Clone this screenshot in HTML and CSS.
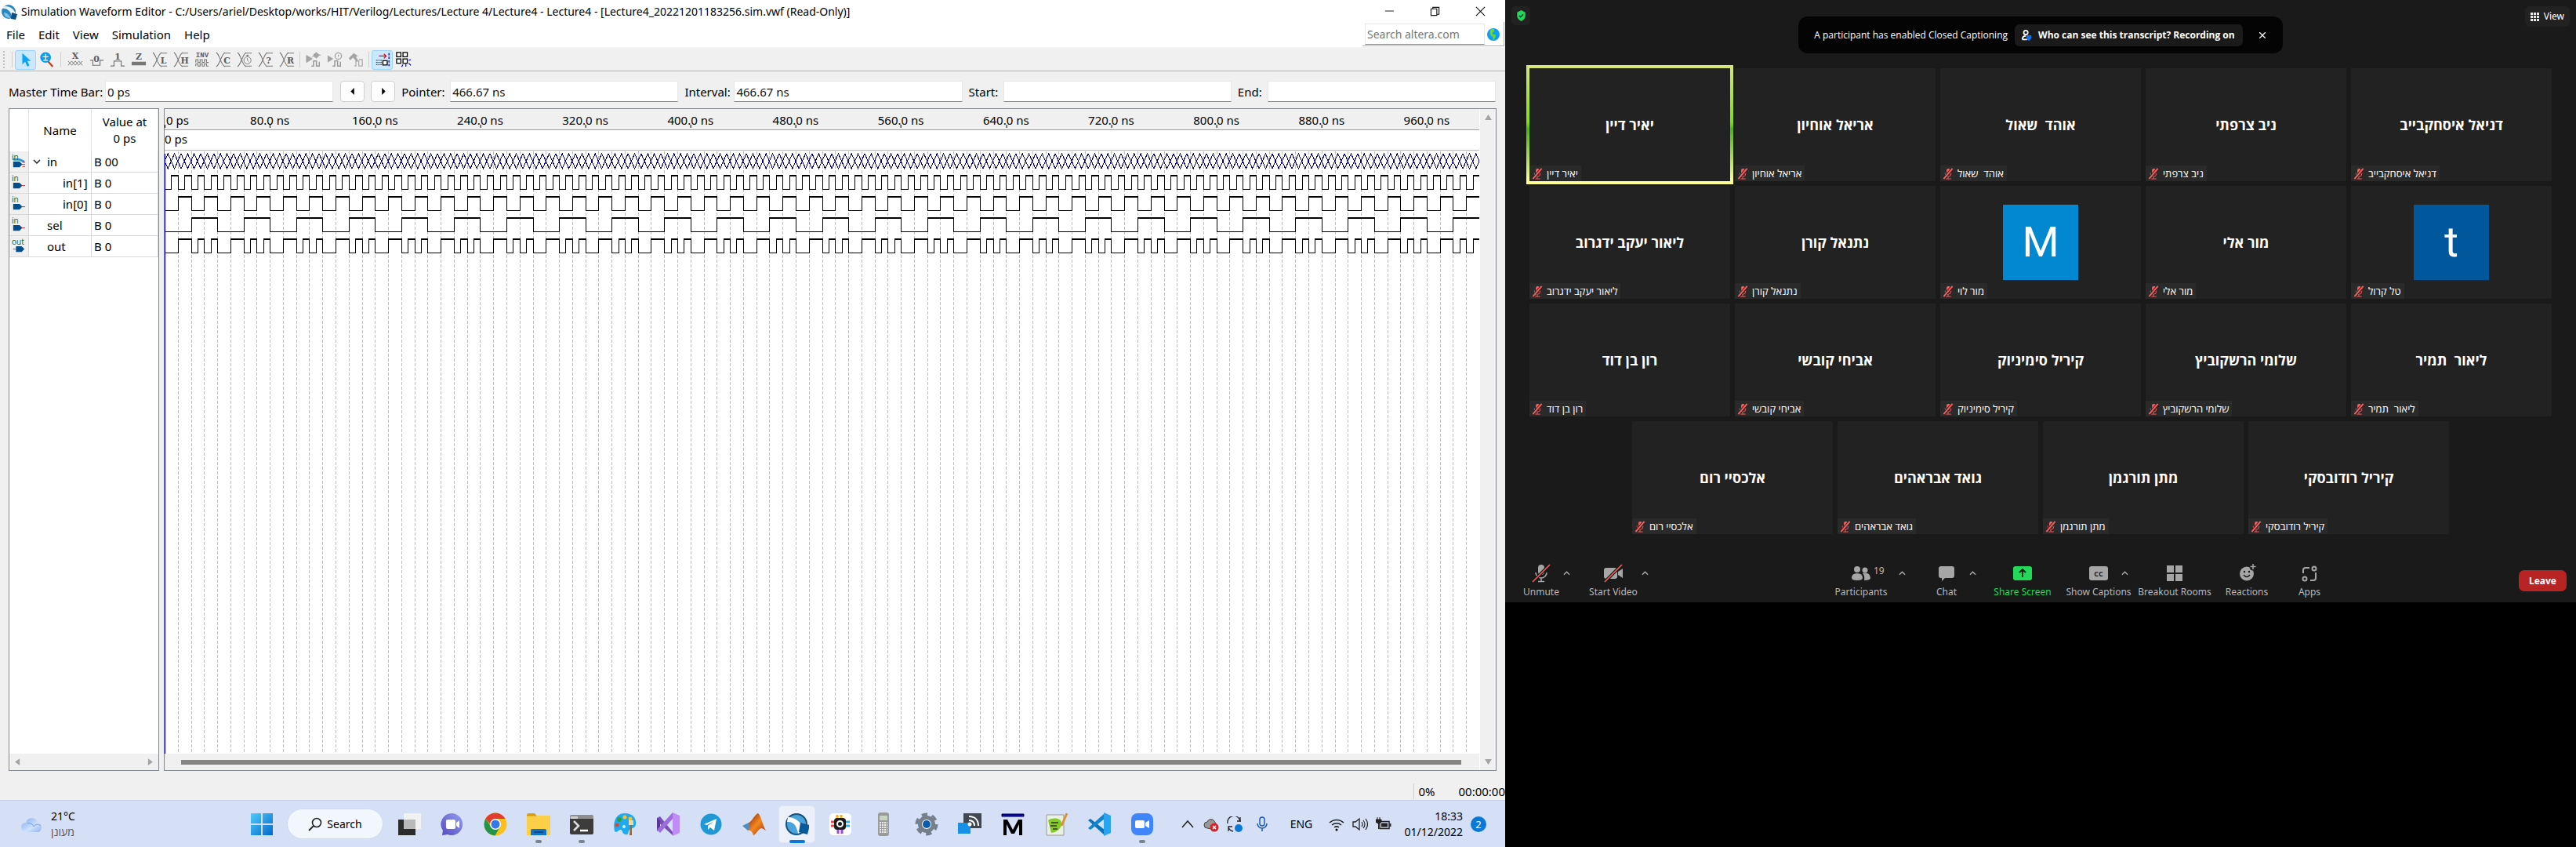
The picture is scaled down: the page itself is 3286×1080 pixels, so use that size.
FILE: index.html
```html
<!DOCTYPE html>
<html lang="en">
<head>
<meta charset="utf-8">
<title>Simulation Waveform Editor</title>
<link rel="stylesheet" href="styles.css">
</head>
<body>
<svg class="defs" aria-hidden="true">
  <defs>
    <symbol id="muted" viewBox="0 0 14 16"><rect x="5" y="1" width="5" height="8" rx="2" fill="#ff5c5c"/><path d="M3 7v1a4 4 0 0 0 8 0V7M7 12v3M4 15h7" stroke="#ff5c5c" stroke-width="1" fill="none"/><path d="M1 15L13 1" stroke="#292929" stroke-width="4"/><path d="M1 15L13 1" stroke="#ff5c5c" stroke-width="2"/></symbol>
    <symbol id="pin" viewBox="0 0 20 22"><path d="M2 11h9l4 4-4 4H2z" fill="#004e8c"/><path d="M14 15h5" stroke="#e02020" stroke-width="1"/></symbol>
    <symbol id="up" viewBox="0 0 10 6"><path d="M1 5l4-4 4 4" fill="none" stroke="#b0b0b0" stroke-width="1.4"/></symbol>
    <symbol id="bus" viewBox="0 0 22 22"><path d="M1 1C6 4 7 18 13 21M13 1C8 4 6 18 1 21M12 2h9M12 20h9" fill="none" stroke="#777" stroke-width="1.2"/></symbol>
    <linearGradient id="win" x1="0" y1="0" x2="1" y2="1"><stop offset="0" stop-color="#4fcbfb"/><stop offset="1" stop-color="#0468cc"/></linearGradient>
    <linearGradient id="purple" x1="0" y1="1" x2="1" y2="0"><stop offset="0" stop-color="#5348c2"/><stop offset="1" stop-color="#94a0f0"/></linearGradient>
    <linearGradient id="cloud" x1="0" y1="0" x2="1" y2="1"><stop offset="0" stop-color="#7ea8f2"/><stop offset=".6" stop-color="#cfe2fb"/><stop offset="1" stop-color="#8fb0f0"/></linearGradient>
    <linearGradient id="flame" x1="0" y1="0" x2="1" y2="1"><stop offset="0" stop-color="#8a1a10"/><stop offset=".5" stop-color="#f28a20"/><stop offset="1" stop-color="#a8200f"/></linearGradient>
  </defs>
</svg>

<main class="editor">
  <header class="titlebar">
    <svg class="app-icon" viewBox="0 0 22 22"><circle cx="10" cy="11" r="9" fill="#2b86c0"/><path d="M2 5C8 2 17 6 19 14l-5 5C14 11 8 6 2 7z" fill="#e8f4fb"/><path d="M4 12c4 0 7 3 8 7-4 0-8-2-8-7z" fill="#7cc4ea"/><path d="M14 12l7 2-2 7-6-1z" fill="#0b4f86"/></svg>
    <h1>Simulation Waveform Editor - C:/Users/ariel/Desktop/works/HIT/Verilog/Lectures/Lecture 4/Lecture4 - Lecture4 - [Lecture4_20221201183256.sim.vwf (Read-Only)]</h1>
    <button class="win-btn" aria-label="Minimize"><svg viewBox="0 0 14 14"><path d="M1 6.500h12" stroke="#111"/></svg></button>
    <button class="win-btn" aria-label="Restore"><svg viewBox="0 0 14 14"><path d="M1.500 3.500h8v9h-8zM4 3V1.500h8.500v9.500H10" fill="none" stroke="#111" stroke-width="1.200"/></svg></button>
    <button class="win-btn" aria-label="Close"><svg viewBox="0 0 14 14"><path d="M1 1l12 12M13 1L1 13" stroke="#111" stroke-width="1.200"/></svg></button>
  </header>
  <nav class="menubar">
    <button>File</button><button>Edit</button><button>View</button><button>Simulation</button><button>Help</button>
    <div class="search-site">
      <input type="text" placeholder="Search altera.com" aria-label="Search altera.com">
      <svg viewBox="0 0 16 16"><circle cx="8" cy="8" r="8" fill="#0aa0f5"/><path d="M5 1c3-1 5 1 4 3S6 5 7 7s5 0 4 3-2 4-3 5c-1-2 0-4-2-5S2 5 5 1z" fill="#6fd52e"/></svg>
    </div>
  </nav>
  <div class="toolbar" role="toolbar">
    <span class="grip"></span><span class="sep"></span>
    <button class="tool on" aria-label="Selection tool"><svg viewBox="0 0 22 22"><path d="M6 2v16l4-4 3 7 3-2-3-6h5z" fill="#0aa5fa"/></svg></button>
    <button class="tool" aria-label="Zoom tool"><svg viewBox="0 0 22 22"><path d="M12 13l7 8" stroke="#c4401c" stroke-width="2.500"/><circle cx="9" cy="8" r="7.500" fill="#0a9df2"/><path d="M5 7h8M9 3v8M6 12h6" stroke="#fff" stroke-width="1.300"/></svg></button>
    <span class="sep wide"></span>
    <button class="tool" aria-label="Forcing unknown"><svg viewBox="0 0 22 22"><path d="M1 19l5-6 5 6 5-6 5 6M1 13l5 6 5-6 5 6 5-6" stroke="#777" fill="none"/><text x="11" y="10">X</text></svg></button>
    <button class="tool" aria-label="Forcing low"><svg viewBox="0 0 22 22"><path d="M2 12h4v7h10v-7h5" stroke="#777" fill="none" stroke-width="1.300"/><text x="11" y="14">0</text></svg></button>
    <button class="tool" aria-label="Forcing high"><svg viewBox="0 0 22 22"><path d="M1 20h5v-7h10v7h5" stroke="#777" fill="none" stroke-width="1.300"/><text x="11" y="11">1</text></svg></button>
    <button class="tool" aria-label="High impedance"><svg viewBox="0 0 22 22"><path d="M1 14h20v5H1z" fill="#777"/><text x="11" y="11">Z</text></svg></button>
    <button class="tool" aria-label="Weak low"><svg viewBox="0 0 22 22"><use href="#bus"/><text x="16" y="16">L</text></svg></button>
    <button class="tool" aria-label="Weak high"><svg viewBox="0 0 22 22"><use href="#bus"/><text x="16" y="16">H</text></svg></button>
    <button class="tool" aria-label="Invert"><svg viewBox="0 0 22 22"><text class="small" x="11" y="8">INV</text><path d="M2 15v-4h3v4h3v-4h3v4h3v-4h3v4h3M2 20v-3h3v3h3v-3h3v3h3v-3h3v3h3" stroke="#777" fill="none" stroke-width="1.200"/></svg></button>
    <button class="tool" aria-label="Count value"><svg viewBox="0 0 22 22"><use href="#bus"/><text x="16" y="16">C</text></svg></button>
    <button class="tool" aria-label="Overwrite clock"><svg viewBox="0 0 22 22"><use href="#bus"/><circle cx="15" cy="12" r="5" fill="#f0f0f0" stroke="#777"/><path d="M15 4v3M13 5h4M15 9v3l2 2" stroke="#777" fill="none"/></svg></button>
    <button class="tool" aria-label="Arbitrary value"><svg viewBox="0 0 22 22"><use href="#bus"/><text x="15" y="16">?</text></svg></button>
    <button class="tool" aria-label="Random values"><svg viewBox="0 0 22 22"><use href="#bus"/><text x="16" y="16">R</text></svg></button>
    <span class="sep"></span>
    <button class="tool" aria-label="Functional simulation" disabled><svg viewBox="0 0 22 22"><path d="M1 5l8 5-8 5zM11 4l4-3 4 4-4 4-4-3zM8 8l3-2M18 4l3 1" fill="#a4a4a4" stroke="#a4a4a4"/><path d="M8 20h3v-7h4v7h4v-6" fill="none" stroke="#999" stroke-width="1.600"/></svg></button>
    <button class="tool" aria-label="Timing simulation" disabled><svg viewBox="0 0 22 22"><path d="M1 5l8 5-8 5z" fill="#a4a4a4"/><circle cx="16" cy="6" r="4.500" fill="none" stroke="#a4a4a4" stroke-width="1.500"/><path d="M16 4v3" stroke="#999"/><path d="M8 20h3v-7h4v7h4v-6" fill="none" stroke="#999" stroke-width="1.600"/></svg></button>
    <button class="tool" aria-label="Generate testbench" disabled><svg viewBox="0 0 22 22"><path d="M1 9l7-7 6 4-3 1 3 5-2 2-5-6-4 4z" fill="#a4a4a4"/><path d="M9 20h2v-7h4v7h5v-9h-5" fill="none" stroke="#aaa" stroke-width="1.400"/></svg></button>
    <span class="sep"></span>
    <button class="tool on" aria-label="Snap to transition"><svg viewBox="0 0 22 22"><path d="M6 6h10M13 3l3 3-3 3" stroke="#e00" fill="none" stroke-width="1.400"/><path d="M2 12h9M2 18h9M2 15h9" stroke="#222" stroke-dasharray="2 1"/><path d="M11.500 12.500h6v6h-6z" fill="#fff" stroke="#000" stroke-width="1.500"/><path d="M20 2v18" stroke="#00f" stroke-width="1.500" stroke-dasharray="3 2"/></svg></button>
    <button class="tool" aria-label="Snap to grid"><svg viewBox="0 0 22 22"><path d="M1 1h6v6H1zM10 1h6v6h-6zM1 10h6v6H1zM10 10h6v6h-6z" fill="#fff" stroke="#000" stroke-width="1.400"/><path d="M18 12l3-1M18 16l3 3M14 17v4M10 18l-2 3" stroke="#00f" stroke-width="1.300"/></svg></button>
  </div>
  <form class="params">
    <label for="f1">Master Time Bar:</label><input id="f1" value="0 ps">
    <div class="stepper">
      <button type="button" aria-label="Previous transition"><svg viewBox="0 0 6 10"><path d="M5 0v10L0 5z"/></svg></button>
      <button type="button" aria-label="Next transition"><svg viewBox="0 0 6 10"><path d="M1 0v10l5-5z"/></svg></button>
      <label for="f2">Pointer:</label>
    </div><input id="f2" value="466.67 ns">
    <label class="mid" for="f3">Interval:</label><input id="f3" value="466.67 ns">
    <label class="mid" for="f4">Start:</label><input id="f4">
    <label class="mid" for="f5">End:</label><input id="f5">
  </form>
  <section class="panes">
    <div class="tree">
      <table>
        <thead><tr><th class="c-icon"></th><th class="c-name">Name</th><th>Value at<br>0 ps</th></tr></thead>
        <tbody>
          <tr><td class="kind"><span>in</span><svg viewBox="0 0 20 22"><path d="M2 8h8c4 0 4 3 8 3" stroke="#2a9ae0" stroke-width="3" fill="none"/><use href="#pin"/><path d="M15 12h4M15 18h4" stroke="#e02020"/></svg></td><td class="n1"><svg class="chev" viewBox="0 0 10 6"><path d="M1 1l4 4 4-4" fill="none" stroke="#222" stroke-width="1.500"/></svg>in</td><td>B 00</td></tr>
          <tr><td class="kind"><span>in</span><svg viewBox="0 0 20 22"><use href="#pin"/></svg></td><td class="n2">in[1]</td><td>B 0</td></tr>
          <tr><td class="kind"><span>in</span><svg viewBox="0 0 20 22"><use href="#pin"/></svg></td><td class="n2">in[0]</td><td>B 0</td></tr>
          <tr><td class="kind"><span>in</span><svg viewBox="0 0 20 22"><use href="#pin"/></svg></td><td class="n0">sel</td><td>B 0</td></tr>
          <tr><td class="kind"><span>out</span><svg viewBox="0 0 20 22"><path d="M6 11h8l4 4-4 4H6z" fill="#004e8c"/><path d="M2 15h4" stroke="#e02020"/></svg></td><td class="n0">out</td><td>B 0</td></tr>
        </tbody>
      </table>
      <div class="hbar ends"><svg viewBox="0 0 8 10"><path d="M7 0v10L0 5z"/></svg><svg viewBox="0 0 8 10"><path d="M1 0v10l7-5z"/></svg></div>
    </div>
    <div class="wave">
      <div class="wave-main">
        <div class="ruler" id="ruler"></div>
        <div class="cursor-band">0 ps</div>
        <div class="plot" id="plot"></div>
        <div class="hbar"><span class="thumb"></span></div>
      </div>
      <div class="vbar"><svg viewBox="0 0 10 8"><path d="M5 0l5 8H0z"/></svg><svg viewBox="0 0 10 8"><path d="M0 0h10L5 8z"/></svg></div>
    </div>
  </section>
  <footer class="status"><span class="pct">0%</span><span>00:00:00</span></footer>

  <nav class="taskbar">
    <button class="weather"><svg viewBox="0 0 30 22"><path d="M7 21a6 6 0 0 1 0-12 8 8 0 0 1 15-1 7 7 0 0 1 1 13z" fill="url(#cloud)"/><path d="M9 10c4-1 7 1 8 4 2-3 6-4 9-1" fill="none" stroke="#6f98e8"/></svg><span>21°C<em dir="rtl">מעונן</em></span></button>
    <button class="task" aria-label="Start"><svg viewBox="0 0 30 30"><path d="M1 1h13v13H1zM16 1h13v13H16zM1 16h13v13H1zM16 16h13v13H16z" fill="url(#win)"/></svg></button>
    <button class="search"><svg viewBox="0 0 18 18"><circle cx="11" cy="7" r="5.500" fill="none" stroke="#222" stroke-width="1.600"/><path d="M7 11l-6 6" stroke="#222" stroke-width="1.800"/></svg>Search</button>
    <button class="task" aria-label="Task view"><svg viewBox="0 0 30 30"><path d="M1 9h22v20H1z" fill="#2b2b2b"/><path d="M8 1h22v20H8z" fill="#f1f1f1"/><path d="M8 9h15v12H8z" fill="#b9b9b9"/></svg></button>
    <button class="task" aria-label="Chat"><svg viewBox="0 0 30 30"><path d="M15 1a14 14 0 1 1-6 27l-7 1 1-6A14 14 0 0 1 15 1z" fill="url(#purple)"/><rect x="7" y="9" width="12" height="12" rx="2" fill="#fff"/><path d="M20 13l4-3v10l-4-3z" fill="#fff"/></svg></button>
    <button class="task" aria-label="Chrome"><svg viewBox="0 0 30 30"><circle cx="15" cy="15" r="14.500" fill="#fbc116"/><path d="M2.500 7.700A14.500 14.500 0 0 1 27.600 8H15l-5 9z" fill="#e33b2e"/><path d="M2.500 7.700A14.500 14.500 0 0 0 14.500 29.500L21 18l-12 0z" fill="#229548"/><circle cx="15" cy="15" r="7" fill="#fff"/><circle cx="15" cy="15" r="5.500" fill="#3479ea"/></svg></button>
    <button class="task run" aria-label="File Explorer"><svg viewBox="0 0 30 30"><path d="M0 3q0-2 2-2h8l3 4H0z" fill="#dda012"/><path d="M0 6h11l3-2h16v25H0z" fill="#fccf48"/><path d="M5 29v-6q0-2 2-2h16q2 0 2 2v6z" fill="#1272c8"/><path d="M9 25h12" stroke="#0a4a92" stroke-width="2"/></svg></button>
    <button class="task run" aria-label="Terminal"><svg viewBox="0 0 30 30"><rect y="4" width="30" height="24" rx="2" fill="#3c3c3c"/><path d="M0 8V5q0-2 2-2h26q2 0 2 2v3z" fill="#8f8f8f"/><path d="M1 8V5h9v3z" fill="#d0d0d0"/><path d="M5 11l6 6-6 6" fill="none" stroke="#ddd" stroke-width="2.500"/><path d="M13 23h10" stroke="#fff" stroke-width="2.500"/></svg></button>
    <button class="task" aria-label="Paint"><svg viewBox="0 0 30 30"><path d="M15 1c10 0 15 6 14 14-1 6-5 4-8 7s0 7-5 6-3-5-6-6-5 5-8 2C-1 10 5 1 15 1z" fill="#1eaaf0"/><circle cx="8" cy="9" r="3" fill="#2ba03c"/><circle cx="15" cy="6" r="2.500" fill="#f6c12a"/><circle cx="22" cy="8" r="2.500" fill="#f6c12a"/><circle cx="5" cy="16" r="2.500" fill="#d94a2c"/><circle cx="14" cy="18" r="2" fill="#d9f1ff"/><path d="M22 16h2v13l-3 0z" fill="#a86422"/><path d="M20 10h6v6h-6z" fill="#f0d9a8"/></svg></button>
    <button class="task" aria-label="Visual Studio"><svg viewBox="0 0 30 30"><path d="M1 7l4-2 17 21-1 3L1 11z" fill="#7a4fb8"/><path d="M1 24V7l4 4v8z" fill="#5a3496"/><path d="M1 22l20-22v8L5 26z" fill="#9d6ddc"/><path d="M21 0l9 4v22l-9 4z" fill="#c08cf6"/></svg></button>
    <button class="task" aria-label="Telegram"><svg viewBox="0 0 30 30"><circle cx="15" cy="15" r="13.500" fill="#2098d4"/><path d="M6 15l16-7-3 15-5-4-3 3v-5l8-6-9 5z" fill="#fff"/></svg></button>
    <button class="task" aria-label="MATLAB"><svg viewBox="0 0 30 30"><path d="M0 17l8-4 5 5-6 5z" fill="#4d8dc0"/><path d="M8 13c4-1 8-11 12-12 4 3 6 16 10 22-4-3-6-4-9-1s-4 6-7 7c-1-4-3-6-7-7 4-2 2-6 1-9z" fill="url(#flame)"/></svg></button>
    <button class="task active" aria-label="Simulation Waveform Editor"><svg viewBox="0 0 30 30"><circle cx="14" cy="15" r="13" fill="#4aa3da" stroke="#13507e" stroke-width="2"/><path d="M3 6c10 0 18 7 19 16l-6 5C14 16 10 11 2 12z" fill="#fff"/><path d="M19 13l12 3-3 12-11-3z" fill="#07599b"/></svg></button>
    <button class="task" aria-label="Chip tool"><svg viewBox="0 0 30 30"><rect x="1" y="1" width="28" height="28" rx="5" fill="#fff"/><path d="M11 3v6M16 3v6" stroke="#f4b400" stroke-width="3"/><path d="M12 21v6M17 21v6" stroke="#9c4ce0" stroke-width="3"/><path d="M3 12h6M3 17h6" stroke="#f04848" stroke-width="3"/><path d="M21 12h6M21 17h6" stroke="#28b4e8" stroke-width="3"/><rect x="7" y="7" width="15" height="15" rx="4" fill="#1c1c1c"/><circle cx="14.500" cy="14.500" r="3.500" fill="none" stroke="#fff" stroke-width="2"/></svg></button>
    <button class="task" aria-label="Calculator"><svg viewBox="0 0 30 30"><rect x="8" y="0" width="14" height="30" rx="3" fill="#9a9a98"/><path d="M10 4h10v6H10z" fill="#c9d3c4"/><path d="M10 13h10M10 16h10M10 19h10M10 22h10M10 25h10" stroke="#eee" stroke-width="2" stroke-dasharray="2 1"/></svg></button>
    <button class="task" aria-label="Settings"><svg viewBox="0 0 30 30"><circle cx="15" cy="15" r="12" fill="none" stroke="#75808c" stroke-width="5" stroke-dasharray="7 5.560"/><circle cx="15" cy="15" r="8.500" fill="#fff" stroke="#75808c" stroke-width="5"/><circle cx="15" cy="15" r="5" fill="#0a5cab"/></svg></button>
    <button class="task" aria-label="Wireless display"><svg viewBox="0 0 30 30"><path d="M7 1h23v19H7z" fill="#414750"/><path d="M14 5c8 0 12 5 12 12M14 10c5 0 7 3 7 7" fill="none" stroke="#fff" stroke-width="2"/><path d="M0 13h16v14H0z" fill="#1790e8"/><circle cx="15" cy="15" r="2.500" fill="#fff"/></svg></button>
    <button class="task" aria-label="ModelSim"><svg viewBox="0 0 30 30"><path d="M1 2h28v3H1z" fill="#00f" stroke="#000"/><path d="M3 29V9h5l7 13 7-13h5v20h-4V15l-6 12h-4L7 15v14z" fill="#000"/></svg></button>
    <button class="task" aria-label="Notepad++"><svg viewBox="0 0 30 30"><path d="M3 3h22v26H3z" fill="#e9f0e4" stroke="#999"/><path d="M5 10c6-4 16-3 17 3s-5 12-13 13z" fill="#86c92a"/><path d="M9 13h9M8 17h8M11 21h6" stroke="#333" stroke-width="1.500"/><path d="M29 1l-7 16" stroke="#d99433" stroke-width="3"/></svg></button>
    <button class="task" aria-label="Visual Studio Code"><svg viewBox="0 0 30 30"><path d="M1 10l3-2 18 14v7z" fill="#0b73b8"/><path d="M1 20l3 2L22 8V1z" fill="#1385cf"/><path d="M21 0l9 4v22l-9 4z" fill="#2aa4ee"/></svg></button>
    <button class="task run" aria-label="Zoom"><svg viewBox="0 0 30 30"><rect x="1" y="1" width="28" height="28" rx="8" fill="#3f85fb"/><rect x="6" y="10" width="12" height="10" rx="2" fill="#fff"/><path d="M19 13l5-3v10l-5-3z" fill="#fff"/></svg></button>
    <div class="tray">
      <svg viewBox="0 0 20 20"><path d="M3 14l7-8 7 8" fill="none" stroke="#222" stroke-width="1.500"/></svg>
      <svg viewBox="0 0 20 20"><path d="M5 15a4 4 0 0 1 0-8 5 5 0 0 1 9-1l4 6-8 4z" fill="#999" stroke="#444"/><circle cx="14" cy="14" r="5.500" fill="#d8222b"/><path d="M12 12l4 4M16 12l-4 4" stroke="#fff" stroke-width="1.500"/></svg>
      <svg viewBox="0 0 20 20"><path d="M1 9a8 8 0 0 1 16-3V1M18 6h-5M2 19v-6h5M2 14a8 8 0 0 0 6 5" fill="none" stroke="#222" stroke-width="1.300"/><circle cx="15" cy="15" r="5" fill="#0a78d6"/></svg>
      <svg class="mic" viewBox="0 0 20 20"><rect x="7" y="1" width="6" height="11" rx="3" fill="#cfe0f8" stroke="#1c56b0" stroke-width="1.400"/><path d="M4 9a6 6 0 0 0 12 0M10 15v4" fill="none" stroke="#1c56b0" stroke-width="1.500"/></svg>
      <span class="lang">ENG</span>
      <svg viewBox="0 0 20 20"><path d="M1 8a13 13 0 0 1 18 0M4 11a9 9 0 0 1 12 0M7 14a5 5 0 0 1 6 0" fill="none" stroke="#222" stroke-width="1.500"/><circle cx="10" cy="17" r="1.500"/></svg>
      <svg viewBox="0 0 20 20"><path d="M1 7h3l5-4v14l-5-4H1z" fill="none" stroke="#222" stroke-width="1.300"/><path d="M12 7q2 3 0 6M14 5q4 5 0 10M17 3q5 7 0 14" fill="none" stroke="#222" stroke-width="1.200"/></svg>
      <svg viewBox="0 0 20 20"><path d="M5 6.500h12v9H5z" fill="none" stroke="#222" stroke-width="1.500"/><path d="M7 8.500h8v5H7z" fill="#222"/><path d="M18.500 9v4" stroke="#222" stroke-width="2"/><path d="M0 4h7v3q-3 4-7 0zM2 1v3M5 1v3M3.500 8v8" fill="#222" stroke="#222"/></svg>
      <time>18:33<br>01/12/2022</time>
      <span class="badge">2</span>
    </div>
  </nav>
</main>

<aside class="meeting">
  <header class="meet-top">
    <span class="shield"><svg viewBox="0 0 14 16"><path d="M7 0l6 3v5q0 5-6 8-6-3-6-8V3z" fill="#23d959"/><path d="M4 8l2 2 4-4" fill="none" stroke="#143" stroke-width="1.800"/></svg></span>
    <div class="banner">A participant has enabled Closed Captioning
      <button class="who"><svg viewBox="0 0 14 16"><circle cx="6" cy="4" r="3" fill="none" stroke="#fff" stroke-width="2"/><path d="M1 14c0-4 2-5 5-5M1 14h7" fill="none" stroke="#fff" stroke-width="2"/><path d="M7 8h7v4q-1 3-3.500 4Q8 15 7 12z" fill="#0e72ed"/></svg>Who can see this transcript? Recording on</button>
      <button class="dismiss" aria-label="Dismiss"><svg viewBox="0 0 8 8"><path d="M0 0l8 8M8 0L0 8" stroke="#fff" stroke-width="1.300"/></svg></button>
    </div>
    <button class="view"><svg viewBox="0 0 11 11"><path d="M0 0h3v3H0zM4 0h3v3H4zM8 0h3v3H8zM0 4h3v3H0zM4 4h3v3H4zM8 4h3v3H8zM0 8h3v3H0zM4 8h3v3H4zM8 8h3v3H8z" fill="#e8e8e8"/></svg>View</button>
  </header>
  <section class="gallery">
    <article class="tile speaking"><b>יאיר דיין</b><span class="tag"><svg><use href="#muted"/></svg><i>יאיר דיין</i></span></article>
    <article class="tile"><b>אריאל אוחיון</b><span class="tag"><svg><use href="#muted"/></svg><i>אריאל אוחיון</i></span></article>
    <article class="tile"><b>אוהד  שאול</b><span class="tag"><svg><use href="#muted"/></svg><i>אוהד  שאול</i></span></article>
    <article class="tile"><b>ניב צרפתי</b><span class="tag"><svg><use href="#muted"/></svg><i>ניב צרפתי</i></span></article>
    <article class="tile"><b>דניאל איסחקבייב</b><span class="tag"><svg><use href="#muted"/></svg><i>דניאל איסחקבייב</i></span></article>
    <article class="tile"><b>ליאור יעקב ידגרוב</b><span class="tag"><svg><use href="#muted"/></svg><i>ליאור יעקב ידגרוב</i></span></article>
    <article class="tile"><b>נתנאל קורן</b><span class="tag"><svg><use href="#muted"/></svg><i>נתנאל קורן</i></span></article>
    <article class="tile"><span class="avatar">M</span><span class="tag"><svg><use href="#muted"/></svg><i>מור לוי</i></span></article>
    <article class="tile"><b>מור אלי</b><span class="tag"><svg><use href="#muted"/></svg><i>מור אלי</i></span></article>
    <article class="tile"><span class="avatar deep">t</span><span class="tag"><svg><use href="#muted"/></svg><i>טל קרול</i></span></article>
    <article class="tile"><b>רון בן דוד</b><span class="tag"><svg><use href="#muted"/></svg><i>רון בן דוד</i></span></article>
    <article class="tile"><b>אביחי קובשי</b><span class="tag"><svg><use href="#muted"/></svg><i>אביחי קובשי</i></span></article>
    <article class="tile"><b>קיריל סימיניוק</b><span class="tag"><svg><use href="#muted"/></svg><i>קיריל סימיניוק</i></span></article>
    <article class="tile"><b>שלומי הרשקוביץ</b><span class="tag"><svg><use href="#muted"/></svg><i>שלומי הרשקוביץ</i></span></article>
    <article class="tile"><b>ליאור  תמיר</b><span class="tag"><svg><use href="#muted"/></svg><i>ליאור  תמיר</i></span></article>
    <article class="tile"><b>אלכסיי רום</b><span class="tag"><svg><use href="#muted"/></svg><i>אלכסיי רום</i></span></article>
    <article class="tile"><b>גואד אבראהים</b><span class="tag"><svg><use href="#muted"/></svg><i>גואד אבראהים</i></span></article>
    <article class="tile"><b>מתן תורגמן</b><span class="tag"><svg><use href="#muted"/></svg><i>מתן תורגמן</i></span></article>
    <article class="tile"><b>קיריל רודובסקי</b><span class="tag"><svg><use href="#muted"/></svg><i>קיריל רודובסקי</i></span></article>
  </section>
  <footer class="controls">
    <div class="group left">
      <button class="ctl w52"><svg viewBox="0 0 24 24"><rect x="8" y="1" width="8" height="13" rx="4"/><path d="M5 11a7 7 0 0 0 14 0M12 18v4M8 22.500h8" fill="none" stroke="#a6a6a6" stroke-width="1.600"/><path d="M1 23L23 1" stroke="#1a1a1a" stroke-width="4"/><path d="M1 23L23 1" stroke="#ff5c5c" stroke-width="1.600"/></svg>Unmute</button>
      <button class="more spaced" aria-label="Audio options"><svg><use href="#up"/></svg></button>
      <button class="ctl w68"><svg viewBox="0 0 24 24"><rect x="0" y="5" width="17" height="14" rx="3"/><path d="M18 10l6-4v12l-6-4z"/><path d="M1 23L23 1" stroke="#1a1a1a" stroke-width="4"/><path d="M1 23L23 1" stroke="#ff5c5c" stroke-width="1.600"/></svg>Start Video</button>
      <button class="more" aria-label="Video options"><svg><use href="#up"/></svg></button>
    </div>
    <div class="group">
      <button class="ctl w92"><svg viewBox="0 0 24 24"><circle cx="7" cy="7" r="4"/><path d="M0 18q0-6 7-6t7 6q0 3-7 3t-7-3z"/><circle cx="17" cy="8" r="3.500"/><path d="M14 12q9-2 10 6 0 3-8 3 1-6-2-9z"/></svg><span class="count">19</span>Participants</button>
      <button class="more" aria-label="Participant options"><svg><use href="#up"/></svg></button>
      <button class="ctl w102"><svg viewBox="0 0 24 24"><path d="M5 3h14q3 0 3 3v9q0 3-3 3h-9l-4 4v-4H5q-3 0-3-3V6q0-3 3-3z"/></svg>Chat</button>
      <button class="more inset" aria-label="Chat options"><svg><use href="#up"/></svg></button>
      <button class="ctl w92 share"><svg viewBox="0 0 24 24"><rect y="3" width="24" height="18" rx="3" fill="#23d959"/><path d="M12 17V8M8 11l4-4 4 4" fill="none" stroke="#1a1a1a" stroke-width="1.800"/></svg>Share Screen</button>
      <button class="ctl w102"><svg viewBox="0 0 24 24"><rect y="3" width="24" height="18" rx="3"/><text x="12" y="16" text-anchor="middle">CC</text></svg>Show Captions</button>
      <button class="more inset" aria-label="Caption options"><svg><use href="#up"/></svg></button>
      <button class="ctl w92"><svg viewBox="0 0 24 24"><path d="M2 2h9v9H2zM13 2h9v9h-9zM2 13h9v9H2zM13 13h9v9h-9z"/></svg>Breakout Rooms</button>
      <button class="ctl w92"><svg viewBox="0 0 24 24"><circle cx="12" cy="12.500" r="9"/><circle cx="9" cy="10" r="1.200" fill="#1a1a1a"/><circle cx="15" cy="10" r="1.200" fill="#1a1a1a"/><path d="M8 14q4 5 8 0" fill="none" stroke="#1a1a1a" stroke-width="1.500"/><circle cx="20" cy="4" r="4.500" fill="#1a1a1a"/><path d="M20 0v7M16.500 3.500h7" stroke="#a6a6a6" stroke-width="1.500"/></svg>Reactions</button>
      <button class="ctl w68"><svg viewBox="0 0 24 24" class="line"><path d="M4 12V8q0-3 3-3h5M20 11v7q0 3-3 3h-4"/><circle cx="18" cy="6" r="2.500"/><circle cx="6" cy="19" r="2.500"/></svg>Apps</button>
    </div>
    <div class="group right"><button class="leave">Leave</button></div>
  </footer>
</aside>
<script src="wave.js"></script>
</body>
</html>
```
FILE: wave.js
```js
const END = 1000;
const ruler = document.getElementById('ruler');
const plot = document.getElementById('plot');

for (let t = 0; t < END; t += 80) {
  const mark = document.createElement('span');
  mark.className = t ? 'mark' : 'mark first';
  mark.style.left = (t / END * 100) + '%';
  mark.textContent = t ? t + '.0 ns' : '0 ps';
  ruler.append(mark);
}

const in1 = t => Math.floor(t / 5) % 2;
const in0 = t => Math.floor(t / 10) % 2;
const sel = t => Math.floor(t / 20) % 2;
const out = t => (sel(t) ? in1(t) : in0(t));

function draw() {
  const w = plot.clientWidth, h = plot.clientHeight;
  const x = t => Math.round(t / END * w);
  let grid = '', high = '', low = '', edges = '', a = '', b = '';

  for (let t = 10; t < END; t += 10) grid += `M${x(t) + .5} 1V${h}`;

  [in1, in0, sel, out].forEach((signal, row) => {
    const top = 32 + row * 27, bottom = top + 17;
    for (let t = 0; t < END; t += 5) {
      const v = signal(t);
      if (v) high += `M${x(t)} ${top}H${x(t + 5) + 1}`;
      else low += `M${x(t)} ${bottom + .5}H${x(t + 5) + 1}`;
      if (t && v !== signal(t - 5)) edges += `M${x(t) + .5} ${top - 1}V${bottom + 1}`;
    }
  });

  for (let i = -1; i <= END / 5; i++) {
    const px = (i + .5) * 5 / END * w;
    const odd = i & 1;
    a += `${a ? 'L' : 'M'}${px} ${odd ? 23 : 4}`;
    b += `${b ? 'L' : 'M'}${px} ${odd ? 4 : 23}`;
  }

  plot.innerHTML = `<svg width="${w}" height="${h}" shape-rendering="crispEdges">
    <path class="grid-line" d="${grid}"/><path class="bus-line" d="${a}${b}"/>
    <path class="high" d="${high}"/><path class="low" d="${low}${edges}"/>
    <path class="time-bar" d="M.5 4V${h}"/></svg>`;
}
draw();
addEventListener('resize', draw);
```
FILE: styles.css
```css
* { box-sizing: border-box; }
body {
  margin: 0;
  background: #000;
  display: grid;
  grid-template-columns: 1920fr 1366fr;
  align-items: start;
  font: 15px/20px "Noto Sans", "Open Sans", sans-serif;
  color: #000;
}
button { font: inherit; color: inherit; background: none; border: 0; padding: 0; margin: 0; }
svg { display: block; }
.defs { position: absolute; width: 0; height: 0; }

/* waveform editor */
.editor { display: flex; flex-direction: column; min-height: 100vh; background: #f0f0f0; min-width: 0; }
.titlebar { display: flex; align-items: center; height: 29px; background: #fff; padding: 0 3px 0 1px; }
.app-icon { width: 22px; height: 24px; margin-right: 4px; }
h1 { font-size: 14px; font-weight: 400; margin: 0; flex: 1; white-space: nowrap; }
.win-btn { width: 58px; height: 28px; display: grid; place-items: center; }
.win-btn svg { width: 13px; height: 13px; }
.menubar { display: flex; align-items: center; gap: 17px; height: 33px; padding: 0 1px 2px 8px; background: #fff; border-bottom: 2px solid #f4f4f4; }
.search-site { margin-left: auto; display: flex; align-items: center; gap: 3px; padding: 2px 5px 1px 3px; border-bottom: 1px solid #b0b0b0; border-right: 1px solid #b0b0b0; }
input { font: inherit; color: #111; background: #fff; border: 1px solid #e8e8e8; border-bottom: 1px solid #868686; padding: 0 2px; height: 27px; width: 100%; min-width: 0; border-radius: 0; }
input::placeholder { color: #777; opacity: 1; }
.search-site input { width: 153px; font-size: 14px; }
.search-site svg { width: 16px; height: 16px; }
.toolbar { display: flex; align-items: center; height: 29px; border-bottom: 1px solid #b4b4b4; padding-left: 4px; }
.grip { width: 3px; height: 22px; border-left: 2px dotted #c0c0c0; margin-right: 5px; }
.sep { width: 1px; height: 20px; background: #cfcfcf; margin: 0 3px; }
.sep.wide { margin: 0 4px; }
.tool { width: 27px; height: 25px; display: grid; place-items: center; border-radius: 3px; border: 1px solid transparent; }
.tool svg { width: 20px; height: 20px; }
.tool.on { background: #cce8ff; border-color: #99d1ff; }
.tool text { font: bold 12px "DejaVu Serif", serif; fill: #5c5c5c; text-anchor: middle; }
.tool text.small { font: bold 10px "Liberation Mono", monospace; }
.params { display: grid; grid-template-columns: 123px 1fr 149px 1fr 71px 1fr 52px 1fr 46px 1fr; align-items: center; padding: 12px 12px 8px 11px; white-space: nowrap; }
.stepper { display: flex; align-items: center; gap: 8px; padding-left: 9px; }
.stepper button { width: 31px; height: 27px; border: 1px solid #d0d0d0; border-radius: 4px; background: #fdfdfd; display: grid; place-items: center; }
.stepper svg { width: 6px; height: 9px; }
.mid { padding-left: 8px; }

.panes { flex: 1; display: flex; gap: 6px; padding: 0 11px; min-height: 500px; }
.tree, .wave { border: 1px solid #828790; background: #fff; display: flex; }
.tree { width: 192px; flex-direction: column; justify-content: space-between; }
table { border-collapse: separate; border-spacing: 0; width: 100%; table-layout: fixed; }
th { font-weight: 400; height: 54px; padding: 0; line-height: 21px; border-right: 1px solid #e2e2e2; }
td { height: 27px; padding: 0 0 0 3px; border-right: 1px solid #d8d8d8; border-bottom: 1px solid #d8d8d8; }
.c-icon { width: 25px; }
.c-name { width: 80px; }
.kind { position: relative; background: #f0f0f0; }
.kind span { position: absolute; top: 1px; left: 3px; font-size: 10px; line-height: 12px; color: #1f6b1f; }
.kind svg { width: 18px; height: 22px; }
td.n1, td.n0 { padding-left: 23px; }
td.n2 { padding-left: 43px; }
.chev { width: 10px; height: 6px; float: left; margin: 7px 0 0 -18px; }
.hbar { height: 21px; background: #f0f0f0; display: flex; align-items: center; padding: 0 23px 0 21px; }
.hbar.ends { justify-content: space-between; padding: 0 7px; }
.hbar.ends svg { width: 7px; height: 9px; }
.hbar svg, .vbar svg { fill: #a3a3a3; }
.thumb { flex: 1; height: 6px; background: #858583; }
.wave { flex: 1; min-width: 0; }
.wave-main { flex: 1; min-width: 0; display: flex; flex-direction: column; }
.ruler { position: relative; height: 27px; background: #f0f0f0; border-bottom: 1px solid #a0a0a0; overflow: hidden; }
.mark { position: absolute; top: 4px; bottom: 0; transform: translateX(-50%); white-space: nowrap; }
.mark::after { content: ""; position: absolute; left: 50%; bottom: 2px; width: 1px; height: 4px; background: #000; }
.mark.first { transform: none; padding-left: 2px; }
.mark.first::after { left: 0; }
.cursor-band { height: 26px; line-height: 22px; border-bottom: 1px solid #b8b8b8; }
.plot { flex: 1; min-height: 0; position: relative; overflow: hidden; }
.plot svg { position: absolute; }
.plot path { fill: none; stroke: #000; }
.plot .grid-line { stroke: #bdbdbd; stroke-dasharray: 4 2; }
.plot .bus-line { stroke: #000080; }
.plot .high { stroke-width: 2px; }
.plot .time-bar { stroke: #00f; }
.vbar { width: 21px; background: #f0f0f0; border-left: 1px solid #fff; display: flex; flex-direction: column; align-items: center; justify-content: space-between; padding: 7px 0; }
.vbar svg { width: 9px; height: 7px; }
.status { height: 37px; display: flex; justify-content: flex-end; align-items: center; padding-top: 14px; gap: 30px; }
.pct { border-left: 1px solid #cfcfcf; padding-left: 5px; }

/* taskbar */
.taskbar { height: 60px; display: flex; align-items: center; background: #d5e0f6; border-top: 1px solid #c3cfe8; padding-right: 24px; }
.weather { width: 306px; padding-left: 26px; display: flex; align-items: center; gap: 9px; text-align: left; font-size: 14px; }
.weather svg { width: 30px; height: 22px; }
.weather em { display: block; font-style: normal; color: #555; }
.task { width: 55px; height: 48px; display: grid; place-items: center; position: relative; }
.task svg { width: 30px; height: 30px; }
.task.run::after, .task.active::after { content: ""; position: absolute; bottom: 0; width: 8px; height: 4px; border-radius: 2px; background: #7b8390; }
.task.active::after { width: 20px; background: #0a78d6; }
.task.active::before { content: ""; position: absolute; inset: 0 4px; border-radius: 5px; background: #ebf0fb; border: 1px solid #dde5f5; }
.task.active svg { position: relative; }
.search { width: 123px; height: 39px; margin: 0 5px; border-radius: 20px; background: #f2f6fd; border: 1px solid #cfdaf0; display: flex; align-items: center; justify-content: center; gap: 6px; font-size: 14px; }
.search svg { width: 18px; height: 18px; }
.tray { margin-left: auto; display: flex; align-items: center; }
.tray svg { width: 20px; height: 20px; margin: 0 5px; }
.tray .mic { margin: 0 10px; }
.lang { width: 60px; text-align: center; font-size: 14px; }
time { width: 86px; text-align: right; font-size: 14px; }
.badge { width: 20px; height: 20px; margin-left: 10px; border-radius: 50%; background: #0a78d6; color: #fff; text-align: center; font-size: 13px; }

/* meeting */
.meeting { background: #1a1a1a; min-width: 0; font-size: 12px; line-height: 16px; color: #fff; }
.meet-top { display: grid; grid-template-columns: 1fr auto 1fr; align-items: start; padding: 8px 8px 0; height: 87px; }
.shield { width: 24px; height: 24px; border-radius: 5px; background: #222; display: grid; place-items: center; }
.shield svg { width: 13px; height: 14px; }
.banner { margin-top: 13px; height: 47px; border-radius: 12px; background: #040404; display: flex; align-items: center; padding: 0 22px 0 20px; gap: 9px; font-family: "Open Sans", sans-serif; font-size: 12px; white-space: nowrap; }
.who { height: 28px; border-radius: 6px; background: #1a1a1a; display: flex; align-items: center; gap: 8px; padding: 0 10px 0 8px; font-weight: 700; }
.who svg { width: 14px; height: 14px; }
.dismiss { padding: 0 0 0 12px; }
.dismiss svg { width: 8px; height: 8px; }
.view { justify-self: end; height: 26px; border-radius: 6px; background: #222; display: flex; align-items: center; gap: 6px; padding: 0 7px; }
.view svg { width: 11px; height: 11px; }
.gallery { display: flex; flex-wrap: wrap; justify-content: center; gap: 6px; padding: 0 31px; }
.tile { flex: 0 0 calc((100% - 24px) / 5); aspect-ratio: 256 / 144; background: #222; display: grid; place-items: center; position: relative; }
.speaking::before { content: ""; position: absolute; inset: -4px; border: 4px solid; border-image: linear-gradient(#d6e67a, #80dd10 48%, #50b414 54%, #ffff94) 1; }
.tile b { font-size: 18px; line-height: 24px; white-space: pre; direction: rtl; }
.tag { position: absolute; left: 0; bottom: 0; height: 20px; background: #2a2a2a; display: flex; align-items: center; gap: 5px; padding: 0 4px 0 3px; font-size: 13px; }
.tag svg { width: 14px; height: 15px; }
.tag i { font-style: normal; white-space: pre; direction: rtl; }
.avatar { width: 96px; height: 96px; background: #0288d1; display: grid; place-items: center; font: 54px/96px Roboto, sans-serif; }
.avatar.deep { background: #01579b; }
.controls { height: 87px; padding: 38px 12px 0 20px; display: grid; grid-template-columns: 388fr auto 294fr; color: #b8b8b8; }
.group { display: flex; align-items: start; }
.right { justify-content: flex-end; }
.ctl { display: flex; flex-direction: column; align-items: center; gap: 4px; position: relative; white-space: nowrap; }
.ctl svg { width: 24px; height: 24px; fill: #a6a6a6; }
.ctl svg.line { fill: none; stroke: #a6a6a6; stroke-width: 2; }
.ctl text { font: bold 9px "Open Sans", sans-serif; fill: #1a1a1a; }
.count { position: absolute; left: 62px; top: 1px; }
.share { color: #23d959; }
.more { width: 12px; height: 24px; display: grid; place-items: center; position: relative; }
.more svg { width: 9px; height: 6px; }
.more.spaced { margin-right: 20px; }
.more.inset { margin: 0 12px 0 -24px; }
.w52 { width: 52px; }
.w68 { width: 68px; }
.w92 { width: 92px; }
.w102 { width: 102px; }
.leave { margin-top: 8px; width: 61px; height: 27px; border-radius: 7px; background: #b82424; color: #fff; font-weight: 700; }
```
